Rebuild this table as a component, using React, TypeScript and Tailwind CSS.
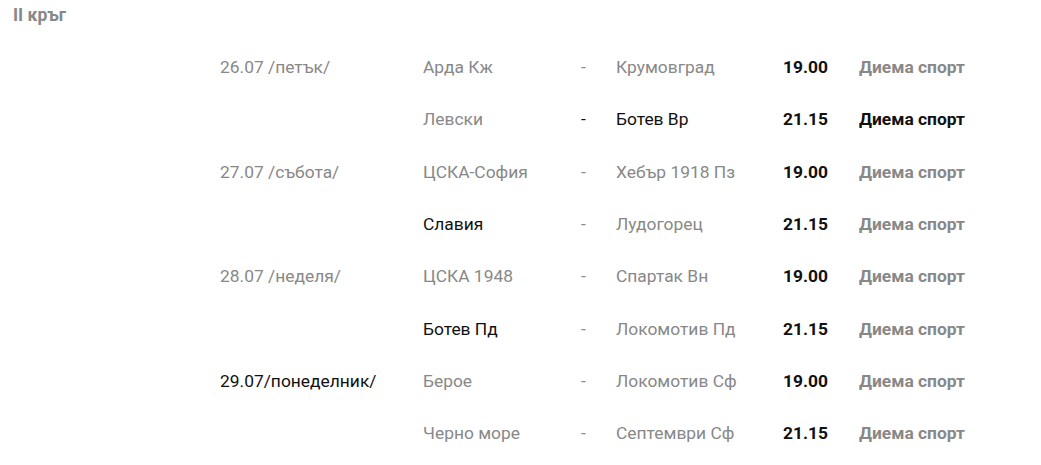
type Tone = "g" | "b";

type Match = {
  date?: string;
  dateTone?: Tone;
  home: string;
  homeTone: Tone;
  dashTone: Tone;
  away: string;
  awayTone: Tone;
  time: string;
  tv: string;
  tvTone: Tone;
};

const matches: Match[] = [
  { date: "26.07 /петък/", dateTone: "g", home: "Арда Кж", homeTone: "g", dashTone: "g", away: "Крумовград", awayTone: "g", time: "19.00", tv: "Диема спорт", tvTone: "g" },
  { home: "Левски", homeTone: "g", dashTone: "b", away: "Ботев Вр", awayTone: "b", time: "21.15", tv: "Диема спорт", tvTone: "b" },
  { date: "27.07 /събота/", dateTone: "g", home: "ЦСКА-София", homeTone: "g", dashTone: "g", away: "Хебър 1918 Пз", awayTone: "g", time: "19.00", tv: "Диема спорт", tvTone: "g" },
  { home: "Славия", homeTone: "b", dashTone: "g", away: "Лудогорец", awayTone: "g", time: "21.15", tv: "Диема спорт", tvTone: "g" },
  { date: "28.07 /неделя/", dateTone: "g", home: "ЦСКА 1948", homeTone: "g", dashTone: "g", away: "Спартак Вн", awayTone: "g", time: "19.00", tv: "Диема спорт", tvTone: "g" },
  { home: "Ботев Пд", homeTone: "b", dashTone: "g", away: "Локомотив Пд", awayTone: "g", time: "21.15", tv: "Диема спорт", tvTone: "g" },
  { date: "29.07/понеделник/", dateTone: "b", home: "Берое", homeTone: "g", dashTone: "g", away: "Локомотив Сф", awayTone: "g", time: "19.00", tv: "Диема спорт", tvTone: "g" },
  { home: "Черно море", homeTone: "g", dashTone: "g", away: "Септември Сф", awayTone: "g", time: "21.15", tv: "Диема спорт", tvTone: "g" },
];

const tone = (t?: Tone) => (t === "b" ? "text-[#111]" : "text-[#888]");

export default function App() {
  return (
    <div className="w-[1041px] h-[465px] bg-white overflow-hidden font-['Roboto',sans-serif]">
      <div className="pl-[13px] pt-[3px] h-[41px] text-[17.5px] leading-6 font-bold text-[#888]">
        II кръг
      </div>

      <div className="pl-[220px]">
        {matches.map((m, i) => (
          <div
            key={i}
            className="grid grid-cols-[203px_158px_35px_167px_76px_1fr] items-center h-[52.3px] text-[17.4px] leading-6"
          >
            <div className={tone(m.dateTone)}>{m.date ?? ""}</div>
            <div className={tone(m.homeTone)}>{m.home}</div>
            <div className={tone(m.dashTone)}>-</div>
            <div className={tone(m.awayTone)}>{m.away}</div>
            <div className="font-bold text-[#111]">{m.time}</div>
            <div className={`font-bold ${tone(m.tvTone)}`}>{m.tv}</div>
          </div>
        ))}
      </div>
    </div>
  );
}
